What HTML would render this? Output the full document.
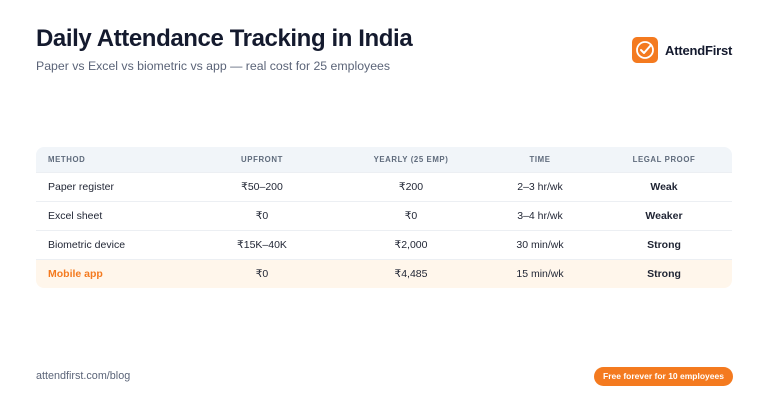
<!DOCTYPE html>
<html><head><meta charset="utf-8"><style>
*{margin:0;padding:0;box-sizing:border-box}
body{width:768px;height:403px;background:#fff;font-family:"Liberation Sans",sans-serif;position:relative;overflow:hidden;color:#111827}
h1{position:absolute;left:36px;top:25px;font-size:24px;font-weight:700;color:#141a2e;letter-spacing:-0.4px}
.sub{position:absolute;left:36px;top:59px;font-size:12.3px;color:#5b6478}
.logo{position:absolute;left:632px;top:37px;width:26px;height:26px;border-radius:5px;background:#f47a1f}
.brand{position:absolute;left:665px;top:43px;font-size:13px;font-weight:700;color:#141a2e;letter-spacing:-0.2px}
.tbl{position:absolute;left:36px;top:147px;width:696px;border-radius:8px;overflow:hidden}
.row{display:flex;height:29px;align-items:center;font-size:10.5px;border-top:1px solid #eceff3;position:relative;color:#1f2433}
.hd{background:#f1f5f9;height:25px;font-size:7.8px;color:#5f6b7c;letter-spacing:0.6px;border-top:none;font-weight:700}
.c0{width:140px;padding-left:12px}
.c{position:absolute;text-align:center;width:120px}
.u{left:166px}.y{left:315px}.t{left:444px}.l{left:568px}
.l{font-weight:700}
.hl{background:#fff6eb}
.hl .c0{color:#f47a1f;font-weight:700}
.foot{position:absolute;left:36px;top:370px;font-size:10.8px;color:#5b6478}
.btn{position:absolute;left:594px;top:367px;width:139px;height:19px;border-radius:10px;background:#f47a1f;color:#fff;font-size:8.5px;font-weight:700;text-align:center;line-height:19px}
</style></head><body>
<h1>Daily Attendance Tracking in India</h1>
<div class="sub">Paper vs Excel vs biometric vs app — real cost for 25 employees</div>
<div class="logo"><svg width="26" height="26" viewBox="0 0 26 26"><circle cx="13" cy="13" r="8" fill="none" stroke="#fff" stroke-width="1.8"/><path d="M9 13l3 3 7-8" fill="none" stroke="#fff" stroke-width="2" stroke-linecap="round" stroke-linejoin="round"/></svg></div>
<div class="brand">AttendFirst</div>
<div class="tbl">
<div class="row hd"><div class="c0">METHOD</div><div class="c u">UPFRONT</div><div class="c y">YEARLY (25 EMP)</div><div class="c t">TIME</div><div class="c l">LEGAL PROOF</div></div>
<div class="row"><div class="c0">Paper register</div><div class="c u">₹50–200</div><div class="c y">₹200</div><div class="c t">2–3 hr/wk</div><div class="c l">Weak</div></div>
<div class="row"><div class="c0">Excel sheet</div><div class="c u">₹0</div><div class="c y">₹0</div><div class="c t">3–4 hr/wk</div><div class="c l">Weaker</div></div>
<div class="row"><div class="c0">Biometric device</div><div class="c u">₹15K–40K</div><div class="c y">₹2,000</div><div class="c t">30 min/wk</div><div class="c l">Strong</div></div>
<div class="row hl"><div class="c0">Mobile app</div><div class="c u">₹0</div><div class="c y">₹4,485</div><div class="c t">15 min/wk</div><div class="c l">Strong</div></div>
</div>
<div class="foot">attendfirst.com/blog</div>
<div class="btn">Free forever for 10 employees</div>
</body></html>
